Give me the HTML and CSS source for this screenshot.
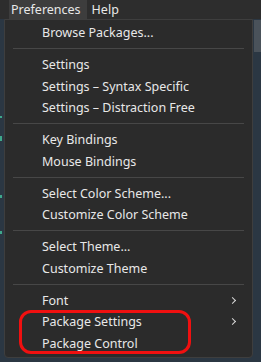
FILE: index.html
```html
<!DOCTYPE html>
<html>
<head>
  <title>Preferences menu</title>
  <link rel="stylesheet" href="styles.css">
</head>
<body>
  <div class="menubar">
    <span class="menu-title active">Preferences</span>
    <span class="menu-title">Help</span>
  </div>

  <div class="stage">
    <div class="gutter">
      <span class="mark m1"></span>
      <span class="mark m2"></span>
      <span class="mark m3"></span>
      <span class="mark m4"></span>
    </div>

    <div class="dropdown">
      <div class="item">Browse Packages...</div>
      <div class="sep"></div>
      <div class="item">Settings</div>
      <div class="item">Settings – Syntax Specific</div>
      <div class="item">Settings – Distraction Free</div>
      <div class="sep"></div>
      <div class="item">Key Bindings</div>
      <div class="item">Mouse Bindings</div>
      <div class="sep"></div>
      <div class="item">Select Color Scheme...</div>
      <div class="item">Customize Color Scheme</div>
      <div class="sep"></div>
      <div class="item">Select Theme...</div>
      <div class="item">Customize Theme</div>
      <div class="sep"></div>
      <div class="item sub">Font <span class="chev"></span></div>
      <div class="item sub">Package Settings <span class="chev"></span></div>
      <div class="item">Package Control</div>

      <!-- red annotation around the package items -->
      <div class="highlight"></div>
    </div>

    <div class="scroll">
      <div class="thumb"></div>
    </div>
  </div>
</body>
</html>
```

FILE: styles.css
```css
html {
  background: #2b3743;
}

body {
  margin: 0;
  font-family: "Noto Sans", "Open Sans", sans-serif;
  font-size: 12.5px;
  color: #e8e8e8;
  display: flex;
  flex-direction: column;
  min-height: 362px;
}

.menubar {
  height: 19px;
  background: #2d2d2d;
  display: flex;
  padding-left: 9px;
}

.menu-title {
  line-height: 19px;
  padding: 0 6px 0 2px;
}

.menu-title.active {
  background: #3d3d3d;
  margin-right: 3px;
}

.stage {
  display: flex;
  flex: 1;
}

.gutter {
  width: 4px;
  display: flex;
  flex-direction: column;
}

.mark {
  width: 2px;
  background: #3fa88c;
}

.m1 { height: 2px; margin-top: 97px; }
.m2 { height: 5px; margin-top: 18px; }
.m3 { height: 3px; margin-top: 54px; }
.m4 { height: 3px; margin-top: 33px; }

.dropdown {
  position: relative;
  width: 247px;
  height: 335px;
  background: #2b2b2b;
  border: 1px solid #3e3e3e;
  border-radius: 0 0 4px 4px;
  padding-top: 2px;
}

.item {
  height: 21.5px;
  line-height: 21.5px;
  padding-left: 37px;
  display: flex;
  align-items: center;
}

.sub {
  justify-content: space-between;
  padding-right: 17px;
}

.chev {
  width: 4px;
  height: 4px;
  border-top: 1.5px solid #d8d8d8;
  border-right: 1.5px solid #d8d8d8;
  transform: rotate(45deg);
}

.sep {
  height: 10.5px;
  display: flex;
  align-items: center;
  padding: 0 8px;
}

.sep::after {
  content: "";
  flex: 1;
  height: 1px;
  background: #474747;
}

.highlight {
  position: absolute;
  left: 14px;
  top: 290px;
  width: 166px;
  height: 38px;
  border: 3px solid #f01010;
  border-radius: 12px;
}

.scroll {
  flex: 1;
  padding-top: 1px;
  padding-left: 1px;
}

.thumb {
  height: 32px;
  background: #4a525a;
}
```
